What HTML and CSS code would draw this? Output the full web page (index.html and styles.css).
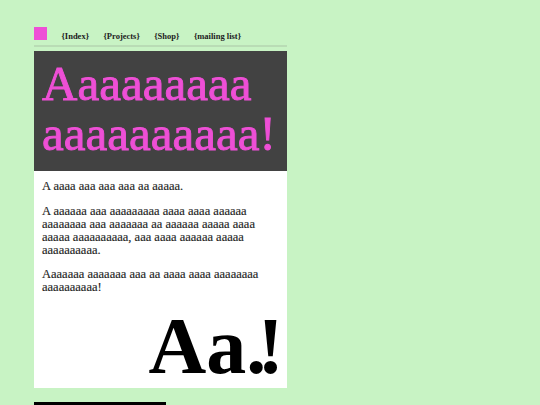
FILE: index.html
```html
<!DOCTYPE html>
<html>
<head>
<meta charset="utf-8">
<link rel="stylesheet" href="styles.css">
</head>
<body>
<div class="page">
  <nav class="nav">
    <span class="logo"></span>
    <a class="link" href="#">{Index}</a>
    <a class="link" href="#">{Projects}</a>
    <a class="link" href="#">{Shop}</a>
    <a class="link" href="#">{mailing list}</a>
  </nav>
  <div class="rule"></div>
  <article class="card">
    <header class="hero">
      <h1 class="title">Aaaaaaaaa aaaaaaaaaa!</h1>
    </header>
    <section class="content">
      <p class="para">A aaaa aaa aaa aaa aa aaaaa.</p>
      <p class="para">A aaaaaa aaa aaaaaaaaa aaaa aaaa aaaaaa aaaaaaaa aaa aaaaaaa aa aaaaaa aaaaa aaaa aaaaa aaaaaaaaaa, aaa aaaa aaaaaa aaaaa aaaaaaaaaa.</p>
      <p class="para">Aaaaaaa aaaaaaa aaa aa aaaa aaaa aaaaaaaa aaaaaaaaaa!</p>
      <div class="big">Aa<span class="dot">.</span>!</div>
    </section>
  </article>
  <div class="bar"></div>
</div>
</body>
</html>
```

FILE: styles.css
```css
html, body {
  margin: 0;
  padding: 0;
  background: #c8f3c4;
  overflow: hidden;
}
body {
  font-family: "Liberation Serif", serif;
  color: #222;
}
.page {
  width: 253px;
  margin-left: 34px;
  padding-top: 27px;
}
.nav {
  display: flex;
  align-items: flex-end;
  gap: 14.5px;
  height: 14px;
}
.logo {
  width: 13px;
  height: 13px;
  background: #ee4fd6;
  flex: none;
  align-self: flex-start;
}
.link {
  font-family: "Liberation Serif", serif;
  font-weight: bold;
  font-size: 8.5px;
  line-height: 10px;
  color: #222;
  text-decoration: none;
}
.rule {
  height: 2px;
  background: #b9dcb5;
  margin-top: 4px;
}
.card {
  margin-top: 4px;
  background: #fff;
}
.hero {
  background: #424242;
  padding: 8px 8px 12px 8px;
}
.title {
  margin: 0;
  font-family: "Liberation Serif", serif;
  font-weight: normal;
  font-size: 49px;
  line-height: 50px;
  color: #ee4fd6;
  -webkit-text-stroke: 0.9px #ee4fd6;
}
.content {
  height: 217px;
  box-sizing: border-box;
  padding: 9px 8px 2px 8px;
  display: flex;
  flex-direction: column;
}
.para {
  margin: 0 0 11.5px 0;
  font-size: 12.5px;
  line-height: 13px;
  color: #222;
  -webkit-text-stroke: 0.15px #222;
}
.big {
  margin-top: auto;
  margin-right: -5px;
  text-align: right;
  font-weight: bold;
  font-size: 80px;
  line-height: 80px;
  color: #000;
}
.dot {
  letter-spacing: -9px;
}
.bar {
  margin-top: 14px;
  width: 132px;
  height: 20px;
  background: #000;
}
```
